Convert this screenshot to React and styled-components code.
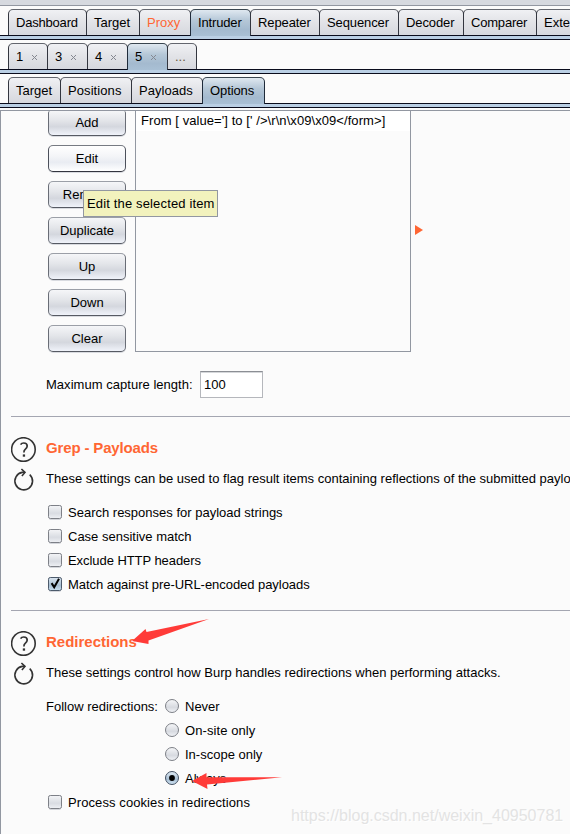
import React from "react";
import styled, { createGlobalStyle, css } from "styled-components";

const Global = createGlobalStyle`
  * { box-sizing: border-box; }
  html, body { margin: 0; padding: 0; overflow: hidden; background: #fbfbfb; }
`;

const Window = styled.div`
  position: relative;
  width: 570px;
  height: 834px;
  overflow: hidden;
  background: #fbfbfb;
  color: #000;
  font: 13px/16px "Liberation Sans", Arial, sans-serif;
  white-space: nowrap;
`;

const TopEdge = styled.div`
  height: 6px;
  background: #d6d9df;
  border-bottom: 1px solid #9297a1;
`;

const TabStrip = styled.nav`
  display: flex;
  align-items: flex-start;
  height: ${(p) => p.$height}px;
  padding: ${(p) => p.$height - 31}px 0 0 8px;
  background: linear-gradient(#0a0c1c 0 1px, #bacfe4 1px 4px, #0a0c1c 4px) bottom / 100% 5px no-repeat;
`;

const Tab = styled.div`
  flex: none;
  display: flex;
  width: ${(p) => p.$width + 1}px;
  height: ${(p) => (p.$active ? 27 : 26)}px;
  margin-right: -1px;
  padding: 5px 0 0 7px;
  border: 1px solid #33363f;
  border-top-color: #63666e;
  border-bottom: 0;
  border-radius: 5px 5px 0 0;
  background: linear-gradient(#f0f1f4, #e3e4e8 45%, #d6d8de);
  color: ${(p) => p.$color || "#000"};
  letter-spacing: ${(p) => p.$ls || 0}px;
  ${(p) =>
    p.$active &&
    css`
      border-color: #1f2b3a;
      border-top-color: #39454f;
      background: linear-gradient(#dfe8f0, #b5c7d7 40%, #a4bacf 75%, #a9c0d5);
    `}
`;

const CloseIcon = styled.svg`
  width: 7px;
  height: 7px;
  margin: 5px 0 0 8px;
`;

const Panel = styled.main`
  height: 724px;
  margin-top: 2px;
  border: solid #9297a1;
  border-width: 1px 0 0 1px;
`;

const ListEditor = styled.section`
  position: relative;
  display: flex;
  height: 241px;
  padding-left: 47px;
`;

const ButtonColumn = styled.div`
  display: flex;
  flex-direction: column;
  gap: 9px;
  height: 242px;
`;

const Button = styled.button`
  flex: none;
  width: 78px;
  height: ${(p) => (p.$cut ? 25 : 27)}px;
  padding: ${(p) => (p.$cut ? 0 : 1)}px 0 0;
  border: 1px solid #696d76;
  border-top: ${(p) => (p.$cut ? "0" : "1px solid #9b9fa7")};
  border-bottom-color: #565a63;
  border-radius: ${(p) => (p.$cut ? "2px 2px 5px 5px" : "5px")};
  box-shadow: 0 1px 0 #d9dbe0;
  background: linear-gradient(#f5f6f8, #e3e5e9 40%, #d4d7de 65%, #f0f3fa);
  font: inherit;
  color: #000;
  ${(p) =>
    p.$hover &&
    css`
      border-color: #4c505b;
      border-top-color: #777b83;
      border-bottom-color: #33353f;
      background: linear-gradient(#fff, #f4f5f8 40%, #e9ecf2 65%, #fff);
    `}
`;

const ListBox = styled.div`
  width: 276px;
  height: 241px;
  margin-left: 9px;
  border: solid #9297a1;
  border-width: 0 1px 1px;
`;

const ListItem = styled.div`
  height: 20px;
  padding: 2px 5px;
  background: #fff;
  letter-spacing: ${(p) => p.$ls}px;
`;

const Marker = styled.svg`
  width: 8px;
  height: 10px;
  margin: 114px 0 0 4px;
`;

const Tooltip = styled.div`
  position: absolute;
  left: 82px;
  top: 79px;
  width: 135px;
  height: 27px;
  padding: 5px 3px;
  border: 1px solid #9297a1;
  background: #f2f2bd;
  letter-spacing: ${(p) => p.$ls}px;
`;

const FieldRow = styled.div`
  display: flex;
  align-items: center;
  height: 27px;
  margin: 19px 0 18px 45px;
`;

const Label = styled.span`
  width: ${(p) => p.$width || "auto"};
  padding-top: ${(p) => p.$drop || 0}px;
  letter-spacing: ${(p) => p.$ls || 0}px;
`;

const TextField = styled.input`
  width: 63px;
  height: 27px;
  padding: 0 3px;
  border: 1px solid #b5b7bc;
  border-top-color: #8b8e94;
  border-radius: 0;
  box-shadow: inset 0 1px #d5d7da;
  background: #fff;
  font: inherit;
  color: #000;
  outline: 0;
`;

const Section = styled.section`
  display: grid;
  grid-template-columns: 35px 1fr;
  height: 194px;
  margin-left: 10px;
  padding-top: 20px;
  border-top: 1px solid #a4a6b1;
`;

const SectionIcons = styled.div`
  display: flex;
  flex-direction: column;
`;

const Title = styled.h2`
  height: 20px;
  margin: 2px 0 0;
  color: #ff6633;
  font-size: 15px;
  line-height: 18px;
  letter-spacing: ${(p) => p.$ls}px;
`;

const Description = styled.p`
  margin: 12px 0 15px;
  letter-spacing: ${(p) => p.$ls}px;
`;

const Options = styled.div`
  display: flex;
`;

const OptionList = styled.div`
  padding-left: ${(p) => p.$indent || 0}px;
`;

const Option = styled.label`
  display: flex;
  align-items: flex-start;
  height: 24px;
  padding-top: 3px;
  gap: 6px;
  letter-spacing: ${(p) => p.$ls || 0}px;
`;

const Box = styled.svg`
  width: 14px;
  height: 15px;
  overflow: visible;
`;

const Arrow = styled.svg`
  position: absolute;
  left: ${(p) => p.$x}px;
  top: ${(p) => p.$y}px;
  overflow: visible;
`;

const Watermark = styled.div`
  position: absolute;
  left: 291px;
  top: 806px;
  color: #e3e3e3;
  text-shadow: 1px 1px #fff;
  font-size: 16px;
  line-height: 19px;
`;

const MAIN_TABS = [
  ["Dashboard", 78, -0.2], ["Target", 53], ["Proxy", 51], ["Intruder", 60, -0.15], ["Repeater", 69, -0.1],
  ["Sequencer", 79, -0.1], ["Decoder", 65, -0.1], ["Comparer", 73, -0.2], ["Extender", 68],
];
const ATTACK_TABS = [["1", 39], ["3", 40], ["4", 40], ["5", 40]];
const VIEW_TABS = [["Target", 52], ["Positions", 71, 0.08], ["Payloads", 71, 0.05], ["Options", 62, -0.1]];
const BUTTONS = ["Add", "Edit", "Remove", "Duplicate", "Up", "Down", "Clear"];

function Cross() {
  return (
    <CloseIcon viewBox="0 0 7 7">
      <path d="M1 1 6 6M6 1 1 6" stroke="#858890" strokeWidth="1" fill="none" />
    </CloseIcon>
  );
}

function HelpIcon() {
  return (
    <svg width="26" height="27" viewBox="0 0 26 27" fill="none" stroke="#333">
      <circle cx="12.4" cy="12.5" r="11.8" strokeWidth="1.6" />
      <path d="M9.6 7.7C10.2 6.6 11.4 6 12.7 6c2.1 0 3.5 1.2 3.5 3 0 1.6-.9 2.4-2 3.3-1 .8-1.3 1.4-1.3 3.2" strokeWidth="1.7" />
      <path d="M11.8 17.4h2.3v2.3h-2.3z" fill="#333" stroke="none" />
    </svg>
  );
}

function ResetIcon() {
  return (
    <svg width="26" height="28" viewBox="0 0 26 28" fill="none" stroke="#333">
      <path d="M18.7 10.6A8.8 8.8 0 1 1 11.2 8.4h2.5" strokeWidth="1.6" />
      <path d="M10.4 5 14 8.4 10.9 12" strokeWidth="1.6" />
    </svg>
  );
}

function CheckBox({ checked }) {
  return (
    <Box viewBox="0 0 14 15">
      <defs>
        <linearGradient id={checked ? "boxOn" : "boxOff"} x1="0" y1="0" x2="0" y2="1">
          <stop offset="0" stopColor={checked ? "#dbe5ef" : "#f4f5f7"} />
          <stop offset=".6" stopColor={checked ? "#a8bfd3" : "#d9dce2"} />
          <stop offset="1" stopColor={checked ? "#c8deef" : "#eff1f5"} />
        </linearGradient>
      </defs>
      <rect x=".5" y=".5" width="13" height="13" rx="1.8" fill={`url(#${checked ? "boxOn" : "boxOff"})`} stroke={checked ? "#4c5a6b" : "#7d8087"} />
      <path d="M1.5 14.5h11" stroke="#d5d7dc" />
      {checked && <path d="M3.6 6.1 6.2 10.3 11 1.8" fill="none" stroke="#000" strokeWidth="2" />}
    </Box>
  );
}

function Radio({ checked }) {
  return (
    <Box viewBox="0 0 14 15">
      <defs>
        <linearGradient id={checked ? "dotOn" : "dotOff"} x1="0" y1="0" x2="0" y2="1">
          <stop offset="0" stopColor={checked ? "#e0ebf5" : "#f6f7f9"} />
          <stop offset=".6" stopColor={checked ? "#a8bfd3" : "#d7dae0"} />
          <stop offset="1" stopColor={checked ? "#d0e4f4" : "#f2f4f8"} />
        </linearGradient>
      </defs>
      <circle cx="7" cy="7" r="6.5" fill={`url(#${checked ? "dotOn" : "dotOff"})`} stroke={checked ? "#435062" : "#7d8087"} />
      {checked && <circle cx="7" cy="7" r="2.9" fill="#000" />}
    </Box>
  );
}

export default function App() {
  return (
    <Window>
      <Global />
      <TopEdge />
      <TabStrip $height={34}>
        {MAIN_TABS.map(([t, w, ls]) => (
          <Tab key={t} $width={w} $ls={ls} $active={t === "Intruder"} $color={t === "Proxy" ? "#ff6633" : undefined}>{t}</Tab>
        ))}
      </TabStrip>
      <TabStrip $height={34}>
        {ATTACK_TABS.map(([t, w]) => (
          <Tab key={t} $width={w} $active={t === "5"}>{t}<Cross /></Tab>
        ))}
        <Tab $width={29} $color="#6b5a3c">...</Tab>
      </TabStrip>
      <TabStrip $height={34}>
        {VIEW_TABS.map(([t, w, ls]) => (
          <Tab key={t} $width={w} $ls={ls} $active={t === "Options"}>{t}</Tab>
        ))}
      </TabStrip>
      <Panel>
        <ListEditor>
          <ButtonColumn>
            {BUTTONS.map((t) => (
              <Button key={t} $cut={t === "Add"} $hover={t === "Edit"}>{t}</Button>
            ))}
          </ButtonColumn>
          <ListBox>
            <ListItem $ls={0.07}>{"From [ value='] to [' />\\r\\n\\x09\\x09</form>]"}</ListItem>
          </ListBox>
          <Marker viewBox="0 0 8 10"><path d="M0 0 8 5 0 10z" fill="#ff6633" /></Marker>
          <Tooltip $ls={0.15}>Edit the selected item</Tooltip>
        </ListEditor>
        <FieldRow>
          <Label $width="154px" $ls={0.03}>Maximum capture length:</Label>
          <TextField defaultValue="100" />
        </FieldRow>
        <Section>
          <SectionIcons><HelpIcon /><ResetIcon /></SectionIcons>
          <div>
            <Title $ls={-0.15}>Grep - Payloads</Title>
            <Description $ls={0}>These settings can be used to flag result items containing reflections of the submitted payload.</Description>
            <OptionList $indent={2}>
              <Option><CheckBox />Search responses for payload strings</Option>
              <Option><CheckBox />Case sensitive match</Option>
              <Option $ls={-0.06}><CheckBox />Exclude HTTP headers</Option>
              <Option $ls={-0.05}><CheckBox checked />Match against pre-URL-encoded payloads</Option>
            </OptionList>
          </div>
        </Section>
        <Section>
          <SectionIcons><HelpIcon /><ResetIcon /></SectionIcons>
          <div>
            <Title $ls={0}>Redirections</Title>
            <Description $ls={0}>These settings control how Burp handles redirections when performing attacks.</Description>
            <Options>
              <Label $width="119px" $drop={3}>Follow redirections:</Label>
              <OptionList>
                <Option><Radio />Never</Option>
                <Option $ls={0.08}><Radio />On-site only</Option>
                <Option><Radio />In-scope only</Option>
                <Option><Radio checked />Always</Option>
              </OptionList>
            </Options>
            <OptionList $indent={2}>
              <Option $ls={0.09}><CheckBox />Process cookies in redirections</Option>
            </OptionList>
          </div>
        </Section>
      </Panel>
      <Arrow $x={132} $y={619} width="80" height="26" viewBox="0 0 80 26">
        <path d="M0 22 13.5 10 14.5 13 77 0 16.5 21.5 16.5 25z" fill="#ff3b38" />
      </Arrow>
      <Arrow $x={192} $y={772} width="92" height="18" viewBox="0 0 92 18">
        <path d="M0 9 14.5 1 14.5 5.2 90 5.2 15 12.5 15.5 17z" fill="#ff3b38" />
      </Arrow>
      <Watermark>https://blog.csdn.net/weixin_40950781</Watermark>
    </Window>
  );
}
